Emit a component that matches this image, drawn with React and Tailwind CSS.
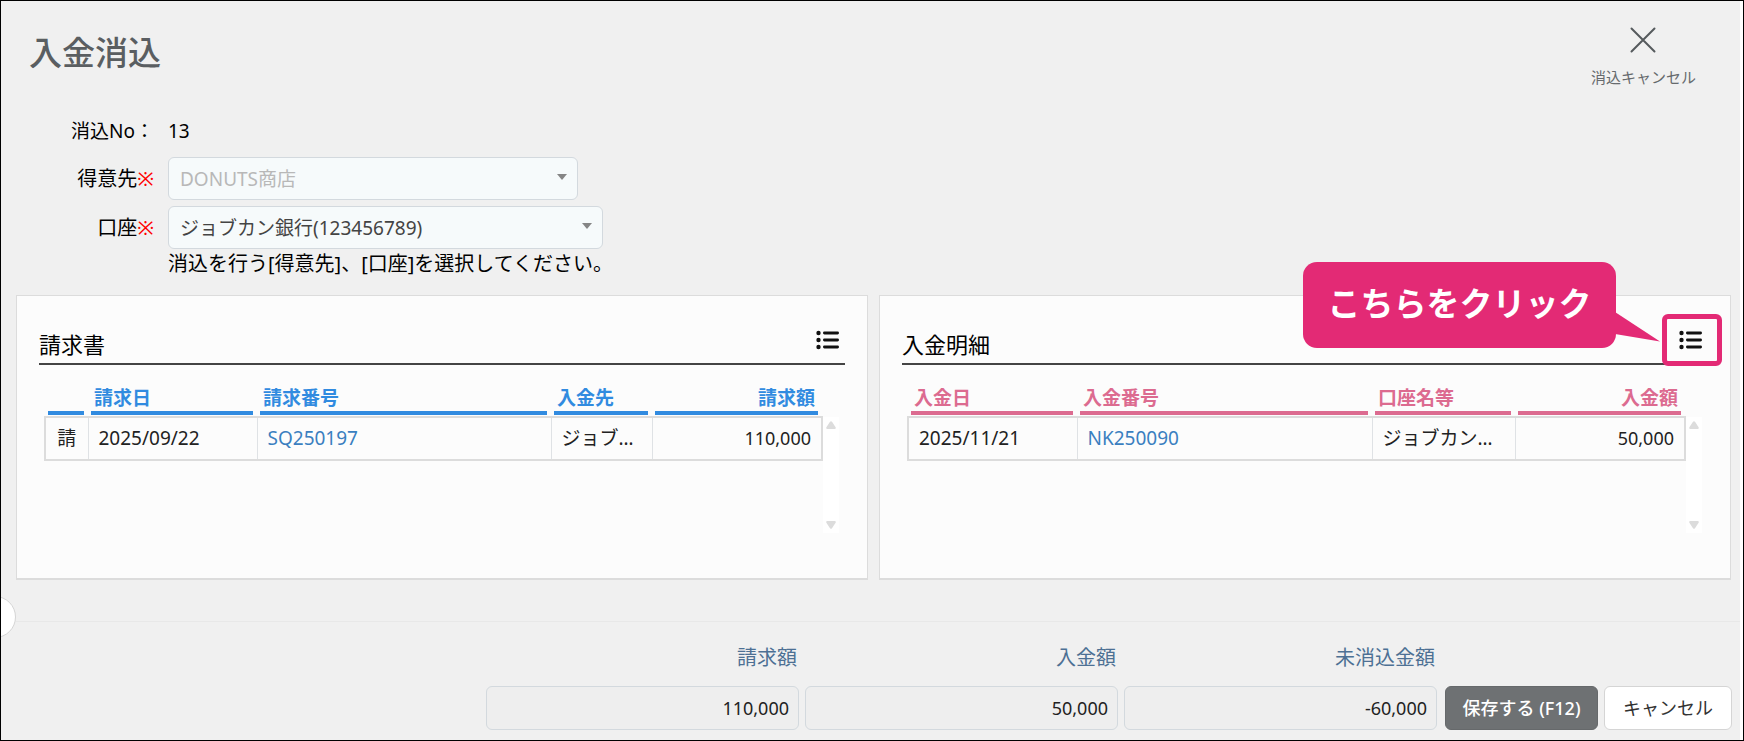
import { useState } from 'react'

const invoiceColumns = [
  { key: 'type', label: '', width: 'w-[43px]', align: 'text-center' },
  { key: 'date', label: '請求日', width: 'w-[169px]', align: 'text-left' },
  { key: 'no', label: '請求番号', width: '', align: 'text-left', link: true },
  { key: 'account', label: '入金先', width: 'w-[101px]', align: 'text-left' },
  { key: 'amount', label: '請求額', width: 'w-[170px]', align: 'text-right' },
]

const invoices = [
  { type: '請', date: '2025/09/22', no: 'SQ250197', account: 'ジョブカン銀行', amount: '110,000' },
]

const depositColumns = [
  { key: 'date', label: '入金日', width: 'w-[169px]', align: 'text-left' },
  { key: 'no', label: '入金番号', width: '', align: 'text-left', link: true },
  { key: 'account', label: '口座名等', width: 'w-[143px]', align: 'text-left' },
  { key: 'amount', label: '入金額', width: 'w-[170px]', align: 'text-right' },
]

const deposits = [
  { date: '2025/11/21', no: 'NK250090', account: 'ジョブカン銀行', amount: '50,000' },
]

const totals = [
  { id: 'total-invoice', label: '請求額', value: '110,000' },
  { id: 'total-deposit', label: '入金額', value: '50,000' },
  { id: 'total-rest', label: '未消込金額', value: '-60,000' },
]

function ListIcon() {
  return (
    <svg width="24" height="20" viewBox="0 0 24 20" fill="#111" aria-hidden="true">
      <circle cx="2.5" cy="3" r="2.2" />
      <circle cx="2.5" cy="10" r="2.2" />
      <circle cx="2.5" cy="17" r="2.2" />
      <rect x="7" y="1.6" width="16" height="2.8" rx="1.4" />
      <rect x="7" y="8.6" width="16" height="2.8" rx="1.4" />
      <rect x="7" y="15.6" width="16" height="2.8" rx="1.4" />
    </svg>
  )
}

function ScrollBar() {
  return (
    <div className="w-4 h-[116px] mt-[37px] flex flex-col items-center justify-between py-1 bg-white">
      <svg width="10" height="8" viewBox="0 0 10 8" className="fill-[#dcdcdc]">
        <path d="M4 .8Q5 -.4 6 .8L9.6 6.2Q10.2 7.8 8.8 8H1.2Q-.2 7.8.4 6.2Z" />
      </svg>
      <svg width="10" height="8" viewBox="0 0 10 8" className="fill-[#dcdcdc]">
        <path d="M4 7.2Q5 8.4 6 7.2L9.6 1.8Q10.2.2 8.8 0H1.2Q-.2.2.4 1.8Z" />
      </svg>
    </div>
  )
}

function SelectBox({ id, width, value, disabled }) {
  return (
    <div className={`relative ${width}`}>
      <select
        id={id}
        disabled={disabled}
        className="appearance-none w-full h-[43px] pl-[11px] pr-8 rounded-md border border-[#d3d9de] bg-[#f6fafb] text-[19px] text-[#444] disabled:text-[#b8b8b8] disabled:opacity-100"
      >
        <option>{value}</option>
      </select>
      <svg width="10" height="6" viewBox="0 0 10 6" className="absolute right-[11px] top-[17px] fill-[#858585] pointer-events-none">
        <path d="M0 0h10L5 6z" />
      </svg>
    </div>
  )
}

function DetailPanel({ title, columns, rows, headText, headBar, children }) {
  return (
    <section className="flex-1 min-w-0 h-[285px] px-[22px] pt-[29px] bg-[#fcfcfc] border border-b-2 border-[#dcdcdc]">
      <div className="flex items-start justify-between h-10 pr-[5px] border-b-2 border-[#444]">
        <h2 className="text-[22px] leading-[38px] text-black">{title}</h2>
        <button type="button" aria-label={`${title}一覧`} className="relative mt-[5px] cursor-pointer">
          <ListIcon />
          {children}
        </button>
      </div>
      <div className="flex items-start pl-[5px] pr-[6px] pt-[15px]">
        <div className="flex-1 min-w-0">
          <table className="w-full table-fixed border-collapse">
            <thead>
              <tr>
                {columns.map((col) => (
                  <th key={col.key} className={`${col.width} pl-[3px] pr-1 pb-px font-bold ${col.align}`}>
                    <div className={`h-[35px] px-[3px] leading-9 border-b-4 ${headText} ${headBar}`}>{col.label}</div>
                  </th>
                ))}
              </tr>
            </thead>
            <tbody>
              {rows.map((row) => (
                <tr key={row.no} className="h-[43px] border-2 border-[#dcdcdc]">
                  {columns.map((col) => (
                    <td key={col.key} className={`px-[10px] pb-[2px] border-r border-[#dfe2e5] text-[#222] truncate ${col.align} ${col.key === 'amount' ? 'text-[18px]' : ''}`}>
                      {col.link ? <a href="#" className="text-[#3a7fc0]">{row[col.key]}</a> : row[col.key]}
                    </td>
                  ))}
                </tr>
              ))}
            </tbody>
          </table>
        </div>
        <ScrollBar />
      </div>
    </section>
  )
}

export default function App() {
  const [open, setOpen] = useState(true)

  return (
    <div className="min-h-screen border border-black bg-white pr-[3px] text-[19px] leading-7 text-black font-['Noto_Sans','Noto_Sans_CJK_JP',sans-serif]">
      <main className="relative overflow-hidden min-h-[739px] bg-[#f0f0f0]">
        <header className="flex items-start justify-between pl-7 pr-11 h-[112px]">
          <h1 className="pt-[25px] text-[33px] leading-[54px] font-medium text-[#5a5e61]">入金消込</h1>
          <button type="button" className="flex flex-col items-center pt-[26px] text-[15px] text-[#666a6d] cursor-pointer">
            <svg width="26" height="26" viewBox="0 0 26 26" fill="none" stroke="#555a5d" strokeWidth="2" strokeLinecap="round">
              <path d="M1.5 1.5l23 23M24.5 1.5l-23 23" />
            </svg>
            <span className="pt-[10px]">消込キャンセル</span>
          </button>
        </header>

        <div className="grid grid-cols-[153px_1fr] gap-x-[14px] gap-y-[6px] items-center">
          <span className="text-right h-[38px] leading-9">消込No：</span>
          <span className="h-[38px] leading-9">13</span>
          <label htmlFor="customer" className="text-right text-[20px]">
            得意先<span className="text-[#ff0000]">※</span>
          </label>
          <SelectBox id="customer" width="w-[410px]" value="DONUTS商店" disabled />
          <label htmlFor="account" className="text-right text-[20px]">
            口座<span className="text-[#ff0000]">※</span>
          </label>
          <SelectBox id="account" width="w-[435px]" value="ジョブカン銀行(123456789)" />
        </div>
        <p className="pl-[167px] text-[20px] leading-[30px] text-black">消込を行う[得意先]、[口座]を選択してください。</p>

        <div className="flex gap-[11px] pl-[15px] pr-[9px] pt-4">
          <DetailPanel title="請求書" columns={invoiceColumns} rows={invoices} headText="text-[#318be0]" headBar="border-[#318be0]" />
          <DetailPanel title="入金明細" columns={depositColumns} rows={deposits} headText="text-[#dc6b90]" headBar="border-[#dc6b90]">
            {open && (
              <span className="absolute -left-[17px] -right-[19px] -inset-y-4 rounded-md border-[5px] border-[#e32a75]">
                <span className="absolute right-[101px] -top-[57px] w-[313px] h-[86px] rounded-[14px] bg-[#e32a75] text-white text-[33px] leading-[84px] font-bold text-center whitespace-nowrap">
                  こちらをクリック
                  <svg width="45" height="31" viewBox="0 0 45 31" className="absolute left-[312px] top-[50px] fill-[#e32a75]">
                    <path d="M0 0L45 29.5L0 22z" />
                  </svg>
                </span>
              </span>
            )}
          </DetailPanel>
        </div>

        <button
          type="button"
          aria-label="メニュー"
          onClick={() => setOpen(!open)}
          className="absolute -left-[27px] top-[595px] size-[42px] rounded-full bg-white border border-[#d5d5d5]"
        />

        <footer className="mt-[41px] ml-[15px] pt-[22px] pr-2 flex items-end justify-end border-t border-[#e8e8e8]">
          <div className="flex gap-[6px]">
            {totals.map((t) => (
              <div key={t.id} className="w-[313px]">
                <label htmlFor={t.id} className="block pr-[2px] text-right text-[20px] text-[#4d7094]">{t.label}</label>
                <input
                  id={t.id}
                  readOnly
                  value={t.value}
                  className="mt-[14px] w-full h-11 px-[9px] rounded-md border border-[#d3d9de] bg-[#eeeeee] text-right text-[18px] text-[#222]"
                />
              </div>
            ))}
          </div>
          <button type="button" className="ml-2 w-[153px] h-11 rounded-md border border-[#66696b] bg-[#6e7173] text-[18px] font-medium text-white">
            保存する (F12)
          </button>
          <button type="button" className="ml-[6px] w-[128px] h-11 rounded-md border border-[#d5d5d5] bg-white text-[18px] text-[#333]">
            キャンセル
          </button>
        </footer>
      </main>
    </div>
  )
}
